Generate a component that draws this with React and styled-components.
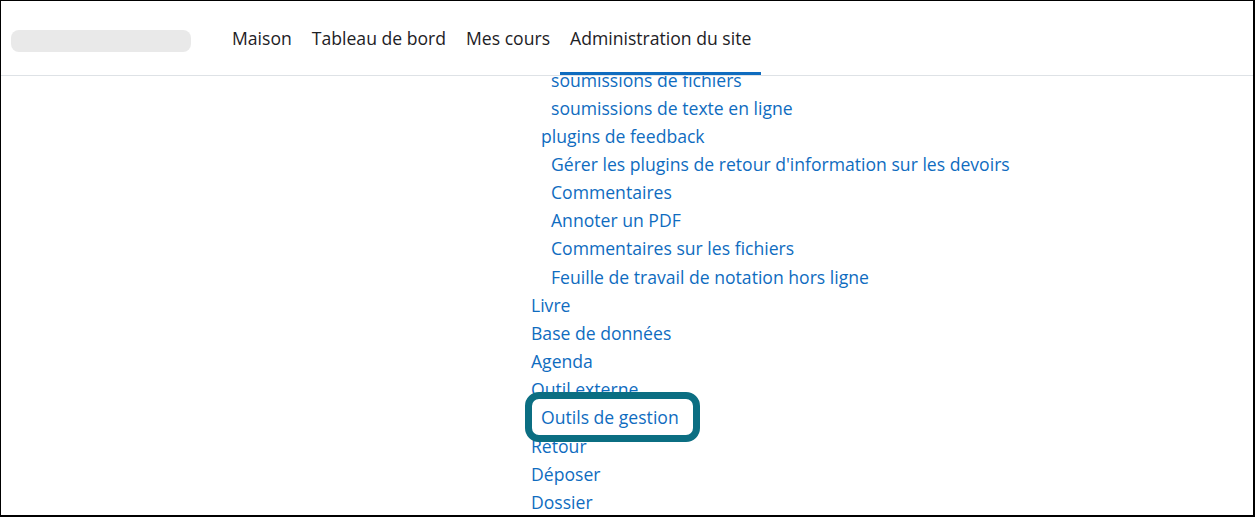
import styled, { createGlobalStyle } from 'styled-components';

const Global = createGlobalStyle`
  html, body { margin: 0; padding: 0; background: #fff; }
  body { font-family: "Open Sans", "Noto Sans", sans-serif; }
  *, *::before, *::after { box-sizing: border-box; }
`;

const Frame = styled.div`
  height: 517px;
  display: flex;
  flex-direction: column;
  border-style: solid;
  border-color: #000;
  border-width: 1px 2px 2px 1px;
  overflow: hidden;
`;

const Navbar = styled.header`
  position: relative;
  z-index: 2;
  height: 75px;
  flex-shrink: 0;
  display: flex;
  align-items: stretch;
  padding-left: 10px;
  background: #fff;
  border-bottom: 1px solid #dee2e6;
`;

const Brand = styled.div`
  align-self: center;
  width: 180px;
  height: 22px;
  margin-top: 6px;
  margin-right: 31px;
  border-radius: 8px;
  background: #e9e9e9;
`;

const NavList = styled.nav`
  display: flex;
  align-items: stretch;
`;

const NavItem = styled.a`
  display: flex;
  align-items: center;
  padding: 3px 10px 0;
  font-size: 17.6px;
  color: #1d2125;
  text-decoration: none;
  border-bottom: 3px solid ${({ $active }) => ($active ? '#0f6cbf' : 'transparent')};
`;

const Content = styled.main`
  flex: 1;
  overflow: hidden;
`;

const Tree = styled.ul`
  list-style: none;
  margin: -10.5px 0 0;
  padding: 0 0 0 530px;
`;

const Node = styled.li`
  position: relative;
  padding-left: ${({ $level }) => $level * 10}px;
  font-size: 17.6px;
  line-height: 28.15px;
  white-space: nowrap;
`;

const Link = styled.a`
  color: #0f6cbf;
  text-decoration: none;
`;

const Callout = styled.li`
  position: relative;
  z-index: 1;
  padding-left: 10px;
  font-size: 17.6px;
  line-height: 28.15px;

  &::before {
    content: '';
    position: absolute;
    z-index: -1;
    left: -6px;
    top: -11px;
    width: 175px;
    height: 50px;
    border: 7px solid #0b6e82;
    border-radius: 14px;
    background: #fff;
  }
`;

const items = [
  ['soumissions de fichiers', 2],
  ['soumissions de texte en ligne', 2],
  ['plugins de feedback', 1],
  ["Gérer les plugins de retour d'information sur les devoirs", 2],
  ['Commentaires', 2],
  ['Annoter un PDF', 2],
  ['Commentaires sur les fichiers', 2],
  ['Feuille de travail de notation hors ligne', 2],
  ['Livre', 0],
  ['Base de données', 0],
  ['Agenda', 0],
  ['Outil externe', 0],
];

const after = ['Retour', 'Déposer', 'Dossier'];

export default function App() {
  return (
    <>
      <Global />
      <Frame>
        <Navbar>
          <Brand />
          <NavList>
            <NavItem href="#">Maison</NavItem>
            <NavItem href="#">Tableau de bord</NavItem>
            <NavItem href="#">Mes cours</NavItem>
            <NavItem href="#" $active>Administration du site</NavItem>
          </NavList>
        </Navbar>
        <Content>
          <Tree>
            {items.map(([label, level]) => (
              <Node key={label} $level={level}>
                <Link href="#">{label}</Link>
              </Node>
            ))}
            <Callout>
              <Link href="#">Outils de gestion</Link>
            </Callout>
            {after.map((label) => (
              <Node key={label} $level={0}>
                <Link href="#">{label}</Link>
              </Node>
            ))}
          </Tree>
        </Content>
      </Frame>
    </>
  );
}
